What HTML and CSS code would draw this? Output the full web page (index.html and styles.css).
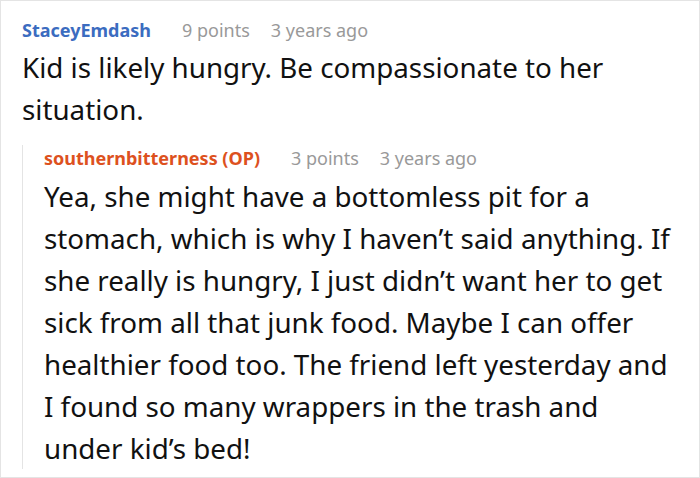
FILE: index.html
```html
<!DOCTYPE html>
<html>
<head>
<meta charset="utf-8">
<link rel="stylesheet" href="styles.css">
</head>
<body>
<div class="thread">
  <div class="comment">
    <div class="meta">
      <span class="author author-blue">StaceyEmdash</span>
      <span class="info">9 points</span>
      <span class="info">3 years ago</span>
    </div>
    <p class="text">Kid is likely hungry. Be compassionate to her situation.</p>
    <div class="reply">
      <div class="meta meta-reply">
        <span class="author author-orange">southernbitterness (OP)</span>
        <span class="info">3 points</span>
        <span class="info">3 years ago</span>
      </div>
      <p class="text">Yea, she might have a bottomless pit for a stomach, which is why I haven’t said anything. If she really is hungry, I just didn’t want her to get sick from all that junk food. Maybe I can offer healthier food too. The friend left yesterday and I found so many wrappers in the trash and under kid’s bed!</p>
    </div>
  </div>
</div>
</body>
</html>
```
FILE: styles.css
```css
html, body {
  margin: 0;
  padding: 0;
  background: #fff;
}
.thread {
  width: 700px;
  height: 478px;
  box-sizing: border-box;
  border: 1px solid #e4e4e4;
  overflow: hidden;
  font-family: "Noto Sans", "Open Sans", sans-serif;
  color: #111;
}
.comment {
  padding: 16px 18px 0 21px;
}
.meta {
  display: flex;
  align-items: baseline;
  font-size: 18px;
  line-height: 26px;
}
.author {
  font-weight: bold;
  margin-right: 31px;
}
.author-blue {
  color: #3b6cc0;
}
.author-orange {
  color: #dd511e;
}
.info {
  color: #999;
  margin-right: 21px;
}
.text {
  margin: 3px 0 0 0;
  font-size: 27.75px;
  line-height: 42px;
}
.reply {
  margin-top: 28px;
  border-left: 1px solid #e4e4e4;
  padding-left: 21px;
}
.meta-reply {
  margin-top: -13px;
}
.reply .text {
  margin-top: 4px;
}
```
